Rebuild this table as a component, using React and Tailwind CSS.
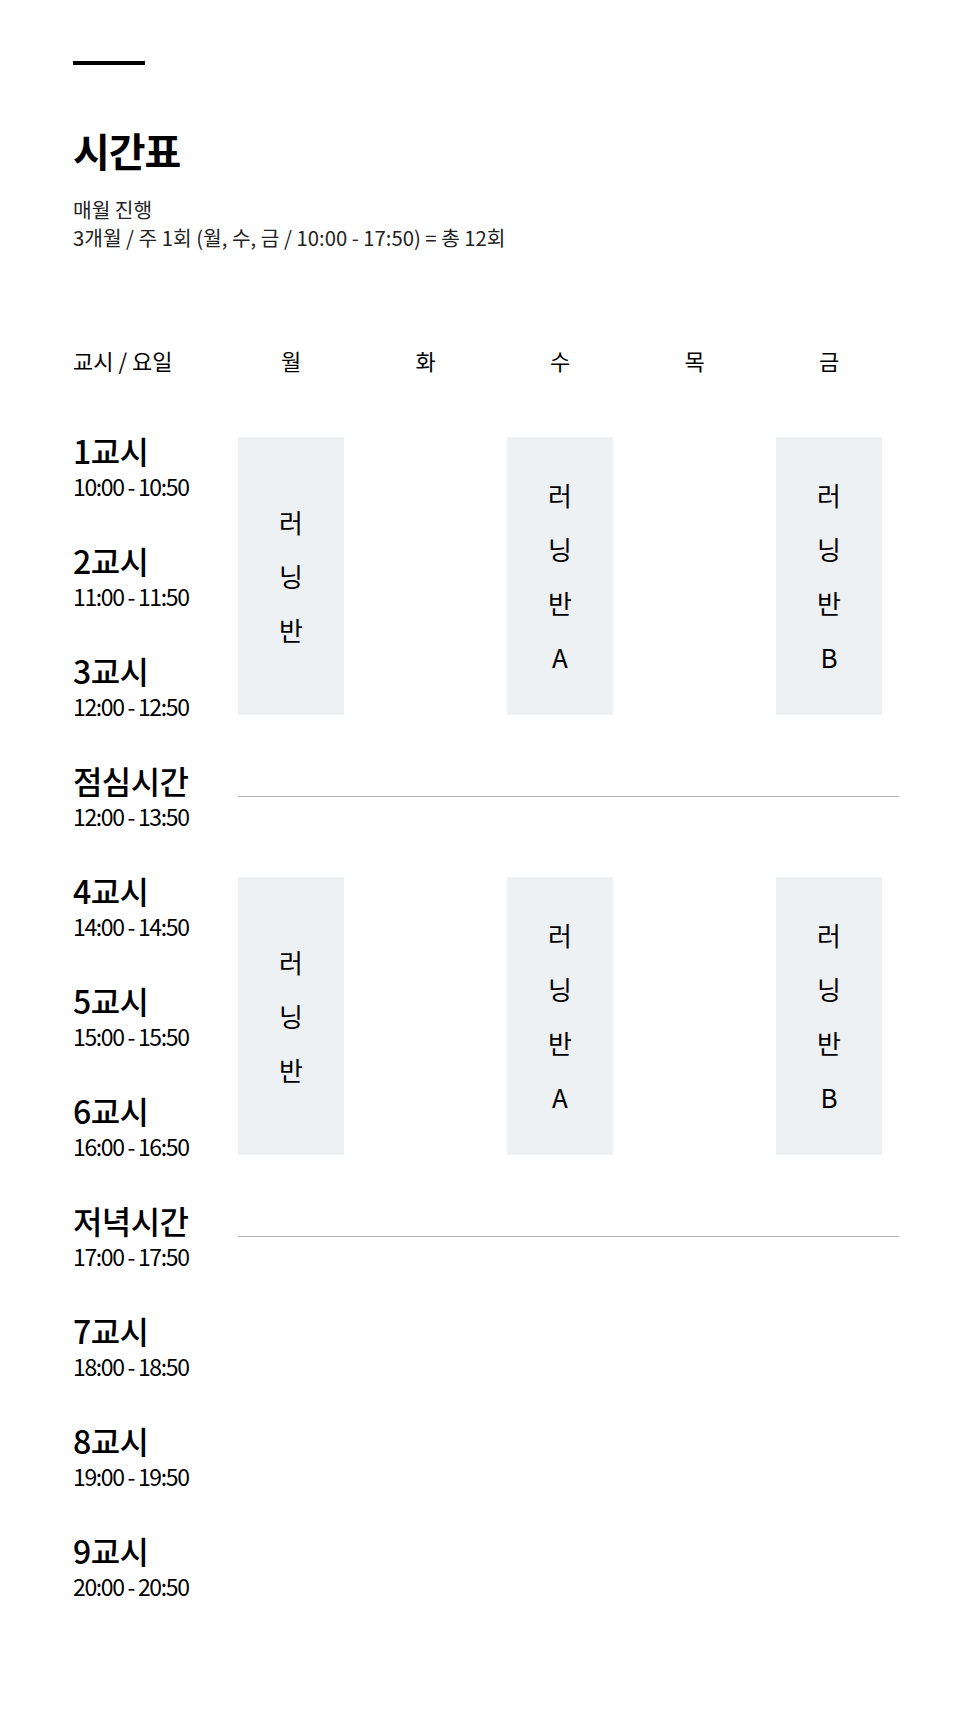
import React from 'react';

const days = ['월', '화', '수', '목', '금'];

const rows = [
  { label: '1교시', time: '10:00 - 10:50' },
  { label: '2교시', time: '11:00 - 11:50' },
  { label: '3교시', time: '12:00 - 12:50' },
  { label: '점심시간', time: '12:00 - 13:50', line: true },
  { label: '4교시', time: '14:00 - 14:50' },
  { label: '5교시', time: '15:00 - 15:50' },
  { label: '6교시', time: '16:00 - 16:50' },
  { label: '저녁시간', time: '17:00 - 17:50', line: true },
  { label: '7교시', time: '18:00 - 18:50' },
  { label: '8교시', time: '19:00 - 19:50' },
  { label: '9교시', time: '20:00 - 20:50' }
];

const Block = ({ col, row, chars }) => (
  <div
    className={`${col} ${row} row-span-3 w-[106px] bg-[#eef1f4] flex flex-col items-center justify-center text-[26px] leading-[54px] text-black`}
  >
    {chars.map((c, i) => (
      <span key={i}>{c}</span>
    ))}
  </div>
);

const App = () => {
  return (
    <div className="min-h-[1713px] bg-white font-['Noto_Sans_CJK_KR','Noto_Sans',sans-serif] text-black pl-[73px] pt-[61px] pb-[118px]">
      {/* Heading */}
      <div className="w-[72px] h-1 bg-black" />
      <h1 className="mt-[62px] text-[40px] leading-[46px] font-bold tracking-[-1px]">시간표</h1>
      <div className="mt-[22px] text-[20.3px] leading-[28px] text-[#222]">
        <p>매월 진행</p>
        <p>3개월 / 주 1회 (월, 수, 금 / 10:00 - 17:50) = 총 12회</p>
      </div>

      {/* Days */}
      <div className="mt-[94px] grid grid-cols-[165px_repeat(5,134.5px)] items-center text-[22px] leading-[30px]">
        <div>교시 / 요일</div>
        {days.map(d => (
          <div key={d} className="w-[106px] text-center">{d}</div>
        ))}
      </div>

      {/* Timetable */}
      <div className="mt-[62px] grid grid-cols-[165px_repeat(5,134.5px)] auto-rows-[58px] gap-y-[52px]">
        {rows.map((r, i) => (
          <React.Fragment key={r.label}>
            <div className="col-start-1 -mt-[3px] flex flex-col" style={{ gridRowStart: i + 1 }}>
              <span className="text-[32px] leading-[32px] font-medium tracking-[-0.6px] whitespace-nowrap">{r.label}</span>
              <span className="mt-[7px] text-[23px] leading-[26px] tracking-[-1.35px] whitespace-nowrap">{r.time}</span>
            </div>
            {r.line && (
              <div className="col-start-2 col-span-5 flex items-center" style={{ gridRowStart: i + 1 }}>
                <div className="w-[661px] h-px bg-[#b4b4b4]" />
              </div>
            )}
          </React.Fragment>
        ))}

        <Block col="col-start-2" row="row-start-1" chars={['러', '닝', '반']} />
        <Block col="col-start-4" row="row-start-1" chars={['러', '닝', '반', 'A']} />
        <Block col="col-start-6" row="row-start-1" chars={['러', '닝', '반', 'B']} />

        <Block col="col-start-2" row="row-start-5" chars={['러', '닝', '반']} />
        <Block col="col-start-4" row="row-start-5" chars={['러', '닝', '반', 'A']} />
        <Block col="col-start-6" row="row-start-5" chars={['러', '닝', '반', 'B']} />
      </div>
    </div>
  );
};

export default App;
